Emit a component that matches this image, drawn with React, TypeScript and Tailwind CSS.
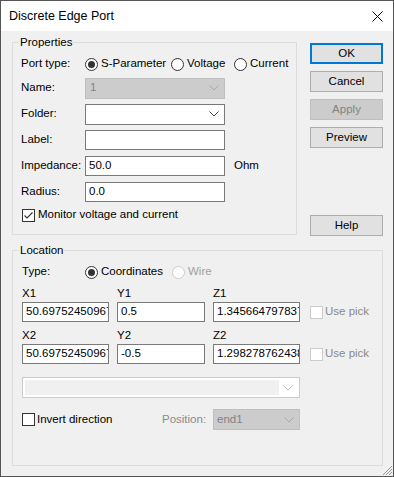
import React from "react";

const Radio = ({ checked, disabled }: { checked?: boolean; disabled?: boolean }) => (
  <span
    className={`w-[13px] h-[13px] rounded-full border bg-white flex items-center justify-center shrink-0 ${
      disabled ? "border-[#cccccc]" : "border-[#333333]"
    }`}
  >
    {checked && <span className="w-[7px] h-[7px] rounded-full bg-[#333333]" />}
  </span>
);

const Check = ({ checked, disabled }: { checked?: boolean; disabled?: boolean }) => (
  <span
    className={`w-[13px] h-[13px] border bg-white flex items-center justify-center shrink-0 ${
      disabled ? "border-[#cccccc]" : "border-[#333333]"
    }`}
  >
    {checked && (
      <svg width="11" height="11" viewBox="0 0 11 11">
        <polyline points="1.5,5.5 4,8 9.5,2.5" fill="none" stroke="#333333" strokeWidth="1.1" />
      </svg>
    )}
  </span>
);

const Chevron = ({ color }: { color: string }) => (
  <svg width="10" height="6" viewBox="0 0 10 6">
    <polyline points="0.5,0.5 5,5 9.5,0.5" fill="none" stroke={color} strokeWidth="1" />
  </svg>
);

const Input = ({ value, w }: { value?: string; w: string }) => (
  <div
    className={`${w} h-[20px] border border-[#7a7a7a] bg-white flex items-center pl-[3px] overflow-hidden whitespace-nowrap`}
  >
    {value}
  </div>
);

const Btn = ({ label, primary, disabled }: { label: string; primary?: boolean; disabled?: boolean }) => (
  <div
    className={`w-[73px] h-[21px] flex items-center justify-center ${
      primary
        ? "border-2 border-[#0078d7] bg-[#e1e1e1]"
        : disabled
        ? "border border-[#bfbfbf] bg-[#cccccc] text-[#838383]"
        : "border border-[#adadad] bg-[#e1e1e1]"
    }`}
  >
    {label}
  </div>
);

export default function App() {
  return (
    <div
      className="w-[394px] h-[477px] bg-[#f0f0f0] border border-[#555555] flex flex-col text-[11.5px] text-black relative"
      style={{ fontFamily: '"Liberation Sans", Arial, sans-serif' }}
    >
      {/* title bar */}
      <div className="h-[30px] bg-white flex items-center justify-between pl-[8px] pr-[10px] shrink-0">
        <span className="text-[12.5px]">Discrete Edge Port</span>
        <svg width="11" height="11" viewBox="0 0 11 11">
          <path d="M0.5 0.5 L10.5 10.5 M10.5 0.5 L0.5 10.5" stroke="#111" strokeWidth="1" />
        </svg>
      </div>

      {/* top section */}
      <div className="flex pl-[11px] mt-[11px]">
        {/* Properties group */}
        <div className="relative w-[285px] h-[193px] border border-[#dcdcdc] pl-[8px] pt-[11px]">
          <span className="absolute left-[6px] top-[-8px] bg-[#f0f0f0] px-[1px] leading-[14px]">Properties</span>
          <div className="flex items-center h-[20px]">
            <span className="w-[64px]">Port type:</span>
            <div className="flex items-center w-[86px] gap-[3px]">
              <Radio checked />
              <span>S-Parameter</span>
            </div>
            <div className="flex items-center w-[63px] gap-[3px]">
              <Radio />
              <span>Voltage</span>
            </div>
            <div className="flex items-center gap-[3px]">
              <Radio />
              <span>Current</span>
            </div>
          </div>
          <div className="flex flex-col gap-[6px] mt-[4px]">
            <div className="flex items-center h-[20px]">
              <span className="w-[64px]">Name:</span>
              <div className="w-[140px] h-[21px] border border-[#bfbfbf] bg-[#cccccc] flex items-center justify-between pl-[4px] pr-[5px] text-[#838383]">
                <span>1</span>
                <Chevron color="#a8a8a8" />
              </div>
            </div>
            <div className="flex items-center h-[20px]">
              <span className="w-[64px]">Folder:</span>
              <div className="w-[140px] h-[21px] border border-[#7a7a7a] bg-white flex items-center justify-end pr-[5px]">
                <Chevron color="#444444" />
              </div>
            </div>
            <div className="flex items-center h-[20px]">
              <span className="w-[64px]">Label:</span>
              <Input w="w-[140px]" />
            </div>
            <div className="flex items-center h-[20px]">
              <span className="w-[64px]">Impedance:</span>
              <Input w="w-[140px]" value="50.0" />
              <span className="ml-[9px]">Ohm</span>
            </div>
            <div className="flex items-center h-[20px]">
              <span className="w-[64px]">Radius:</span>
              <Input w="w-[140px]" value="0.0" />
            </div>
            <div className="flex items-center h-[14px] ml-[1px] gap-[3px]">
              <Check checked />
              <span>Monitor voltage and current</span>
            </div>
          </div>
        </div>

        {/* buttons */}
        <div className="ml-[13px] mt-[1px] flex flex-col justify-between h-[193px]">
          <div className="flex flex-col gap-[7px]">
            <Btn label="OK" primary />
            <Btn label="Cancel" />
            <Btn label="Apply" disabled />
            <Btn label="Preview" />
          </div>
          <Btn label="Help" />
        </div>
      </div>

      {/* Location group */}
      <div className="ml-[11px] mt-[14px] relative w-[371px] h-[216px] border border-[#dcdcdc] pl-[9px] pt-[13px]">
        <span className="absolute left-[6px] top-[-8px] bg-[#f0f0f0] px-[1px] leading-[14px]">Location</span>
        <div className="flex items-center h-[16px]">
          <span className="w-[63px]">Type:</span>
          <div className="flex items-center w-[87px] gap-[3px]">
            <Radio checked />
            <span>Coordinates</span>
          </div>
          <div className="flex items-center gap-[3px] text-[#a0a0a0]">
            <Radio disabled />
            <span>Wire</span>
          </div>
        </div>

        {[
          ["X1", "Y1", "Z1", "50.69752450967", "0.5", "1.345664797837"],
          ["X2", "Y2", "Z2", "50.69752450967", "-0.5", "1.298278762438"],
        ].map((r, i) => (
          <div key={i} className={i === 0 ? "mt-[6px]" : "mt-[6px]"}>
            <div className="flex h-[15px] items-center">
              <span className="w-[95px]">{r[0]}</span>
              <span className="w-[96px]">{r[1]}</span>
              <span>{r[2]}</span>
            </div>
            <div className="flex items-center mt-[1px]">
              <Input w="w-[87px]" value={r[3]} />
              <div className="w-[8px]" />
              <Input w="w-[88px]" value={r[4]} />
              <div className="w-[8px]" />
              <Input w="w-[87px]" value={r[5]} />
              <div className="ml-[10px] flex items-center gap-[2px] text-[#8a8a8a]">
                <Check disabled />
                <span>Use pick</span>
              </div>
            </div>
          </div>
        ))}

        <div className="mt-[13px] w-[278px] h-[21px] border border-[#cccccc] bg-white p-[2px] flex">
          <div className="flex-1 bg-[#f0f0f0]" />
          <div className="w-[18px] flex items-center justify-center">
            <Chevron color="#c0c0c0" />
          </div>
        </div>

        <div className="mt-[11px] flex items-center h-[21px]">
          <div className="flex items-center gap-[2px] w-[140px]">
            <Check />
            <span>Invert direction</span>
          </div>
          <span className="w-[51px] text-[#8a8a8a]">Position:</span>
          <div className="w-[87px] h-[21px] border border-[#bfbfbf] bg-[#cccccc] flex items-center justify-between pl-[3px] pr-[5px] text-[#838383]">
            <span>end1</span>
            <Chevron color="#a8a8a8" />
          </div>
        </div>
      </div>

      {/* resize grip */}
      <svg className="absolute right-[1px] bottom-[1px]" width="10" height="10" viewBox="0 0 10 10">
        <path d="M10 1 L1 10 M10 4 L4 10 M10 7 L7 10" stroke="#9a9a9a" strokeWidth="1" />
      </svg>
    </div>
  );
}
